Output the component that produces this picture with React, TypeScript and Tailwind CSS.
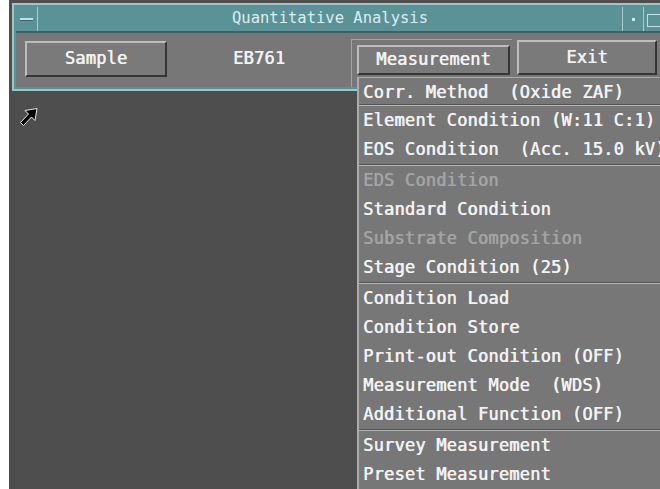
const mono = "font-['DejaVu_Sans_Mono','Liberation_Mono',monospace]";
const heavy = "[text-shadow:0.6px_0_0_currentColor] tracking-[0.2px]";

type Item = { label: string; disabled?: boolean };

const groups: Item[][] = [
  [{ label: "Corr. Method  (Oxide ZAF)" }],
  [{ label: "Element Condition (W:11 C:1)" }, { label: "EOS Condition  (Acc. 15.0 kV)" }],
  [
    { label: "EDS Condition", disabled: true },
    { label: "Standard Condition" },
    { label: "Substrate Composition", disabled: true },
    { label: "Stage Condition (25)" },
  ],
  [
    { label: "Condition Load" },
    { label: "Condition Store" },
    { label: "Print-out Condition (OFF)" },
    { label: "Measurement Mode  (WDS)" },
    { label: "Additional Function (OFF)" },
  ],
  [{ label: "Survey Measurement" }, { label: "Preset Measurement" }],
];

function MenuRow({ item, first }: { item: Item; first: boolean }) {
  return (
    <div
      className={`${first ? "h-[26px] pt-[2px]" : "h-[29px]"} flex items-center pl-[4px] whitespace-pre text-[17px] leading-none ${heavy} ${
        item.disabled ? "text-[#a4a4a4]" : "text-[#f2f2f2]"
      }`}
    >
      {item.label}
    </div>
  );
}

function MeasurementMenu() {
  return (
    <div className={`absolute left-[357px] top-[77px] w-[320px] bottom-0 bg-[#777777] border-l-[2px] border-t-[1px] border-[#ababab] ${mono}`}>
      {groups.map((g, gi) => (
        <div key={gi}>
          {gi > 0 && (
            <div className="h-[2px] flex flex-col">
              <div className="h-[1px] bg-[#555555]" />
              <div className="h-[1px] bg-[#b4b4b4]" />
            </div>
          )}
          {g.map((item, ii) => (
            <MenuRow key={item.label} item={item} first={gi === 0 && ii === 0} />
          ))}
        </div>
      ))}
    </div>
  );
}

function Cursor() {
  return (
    <svg className="absolute left-[19px] top-[107px]" width="20" height="20" viewBox="0 0 20 20">
      <polygon
        points="18,1.5 6,3.5 9.5,7 1.5,15.5 4.5,18.5 12.5,10 16,13.5"
        fill="#000"
        stroke="#e8e8e8"
        strokeWidth="1"
        strokeLinejoin="round"
      />
    </svg>
  );
}

function TitleBar() {
  return (
    <div className="h-[24px] flex border-b-[2px] border-[#3e5f63] box-content">
      <div className="w-[22px] shrink-0 border-r border-[#a6cdd1] flex items-center justify-center">
        <div className="w-[13px] h-[3px] bg-[#c4dfe2] border-b border-[#3f6468]" />
      </div>
      <div className={`w-[584px] shrink-0 flex items-center justify-center text-[15.5px] text-[#dcecee] ${mono}`}>
        Quantitative Analysis
      </div>
      <div className="w-[22px] shrink-0 border-x border-[#a6cdd1] flex items-center justify-center">
        <div className="w-[3px] h-[3px] bg-[#d0e6e8]" />
      </div>
      <div className="w-[30px] shrink-0 pl-[3px] pt-[7px]">
        <div className="w-[20px] h-[13px] border border-[#c4dfe2]" />
      </div>
    </div>
  );
}

function Button({ label, className }: { label: string; className: string }) {
  return (
    <div
      className={`shrink-0 flex items-center justify-center bg-[#7a7a7a] border-2 border-t-[#bdbdbd] border-l-[#bdbdbd] border-b-[#363636] border-r-[#363636] text-[17px] text-[#f2f2f2] ${heavy} ${mono} ${className}`}
    >
      {label}
    </div>
  );
}

export default function App() {
  return (
    <div className="w-[660px] h-[489px] overflow-hidden relative flex bg-white">
      <div className="w-[9px] shrink-0 bg-white" />
      <div className="flex-1 min-w-0 bg-[#4e4e4e] pt-[3px]">
        <div className="ml-[3px] w-[720px] border-2 border-[#9ec5c9] bg-[#5b9298] p-[2px]">
          <TitleBar />
          <div className="h-[54px] bg-[#777777] flex items-start pl-[9px]">
            <Button label="Sample" className="w-[142px] h-[36px] mt-[8px]" />
            <div className={`w-[184px] h-[36px] mt-[8px] flex items-center justify-center text-[17px] text-[#f2f2f2] ${heavy} ${mono}`}>
              EB761
            </div>
            <div className="w-[161px] h-[48px] mt-[6px] border-l border-t border-[#a5a5a5] pl-[5px] pt-[5px]">
              <Button label="Measurement" className="w-[153px] h-[30px]" />
            </div>
            <Button label="Exit" className="w-[140px] h-[35px] mt-[7px] ml-[5px]" />
          </div>
        </div>
      </div>
      <Cursor />
      <MeasurementMenu />
    </div>
  );
}
